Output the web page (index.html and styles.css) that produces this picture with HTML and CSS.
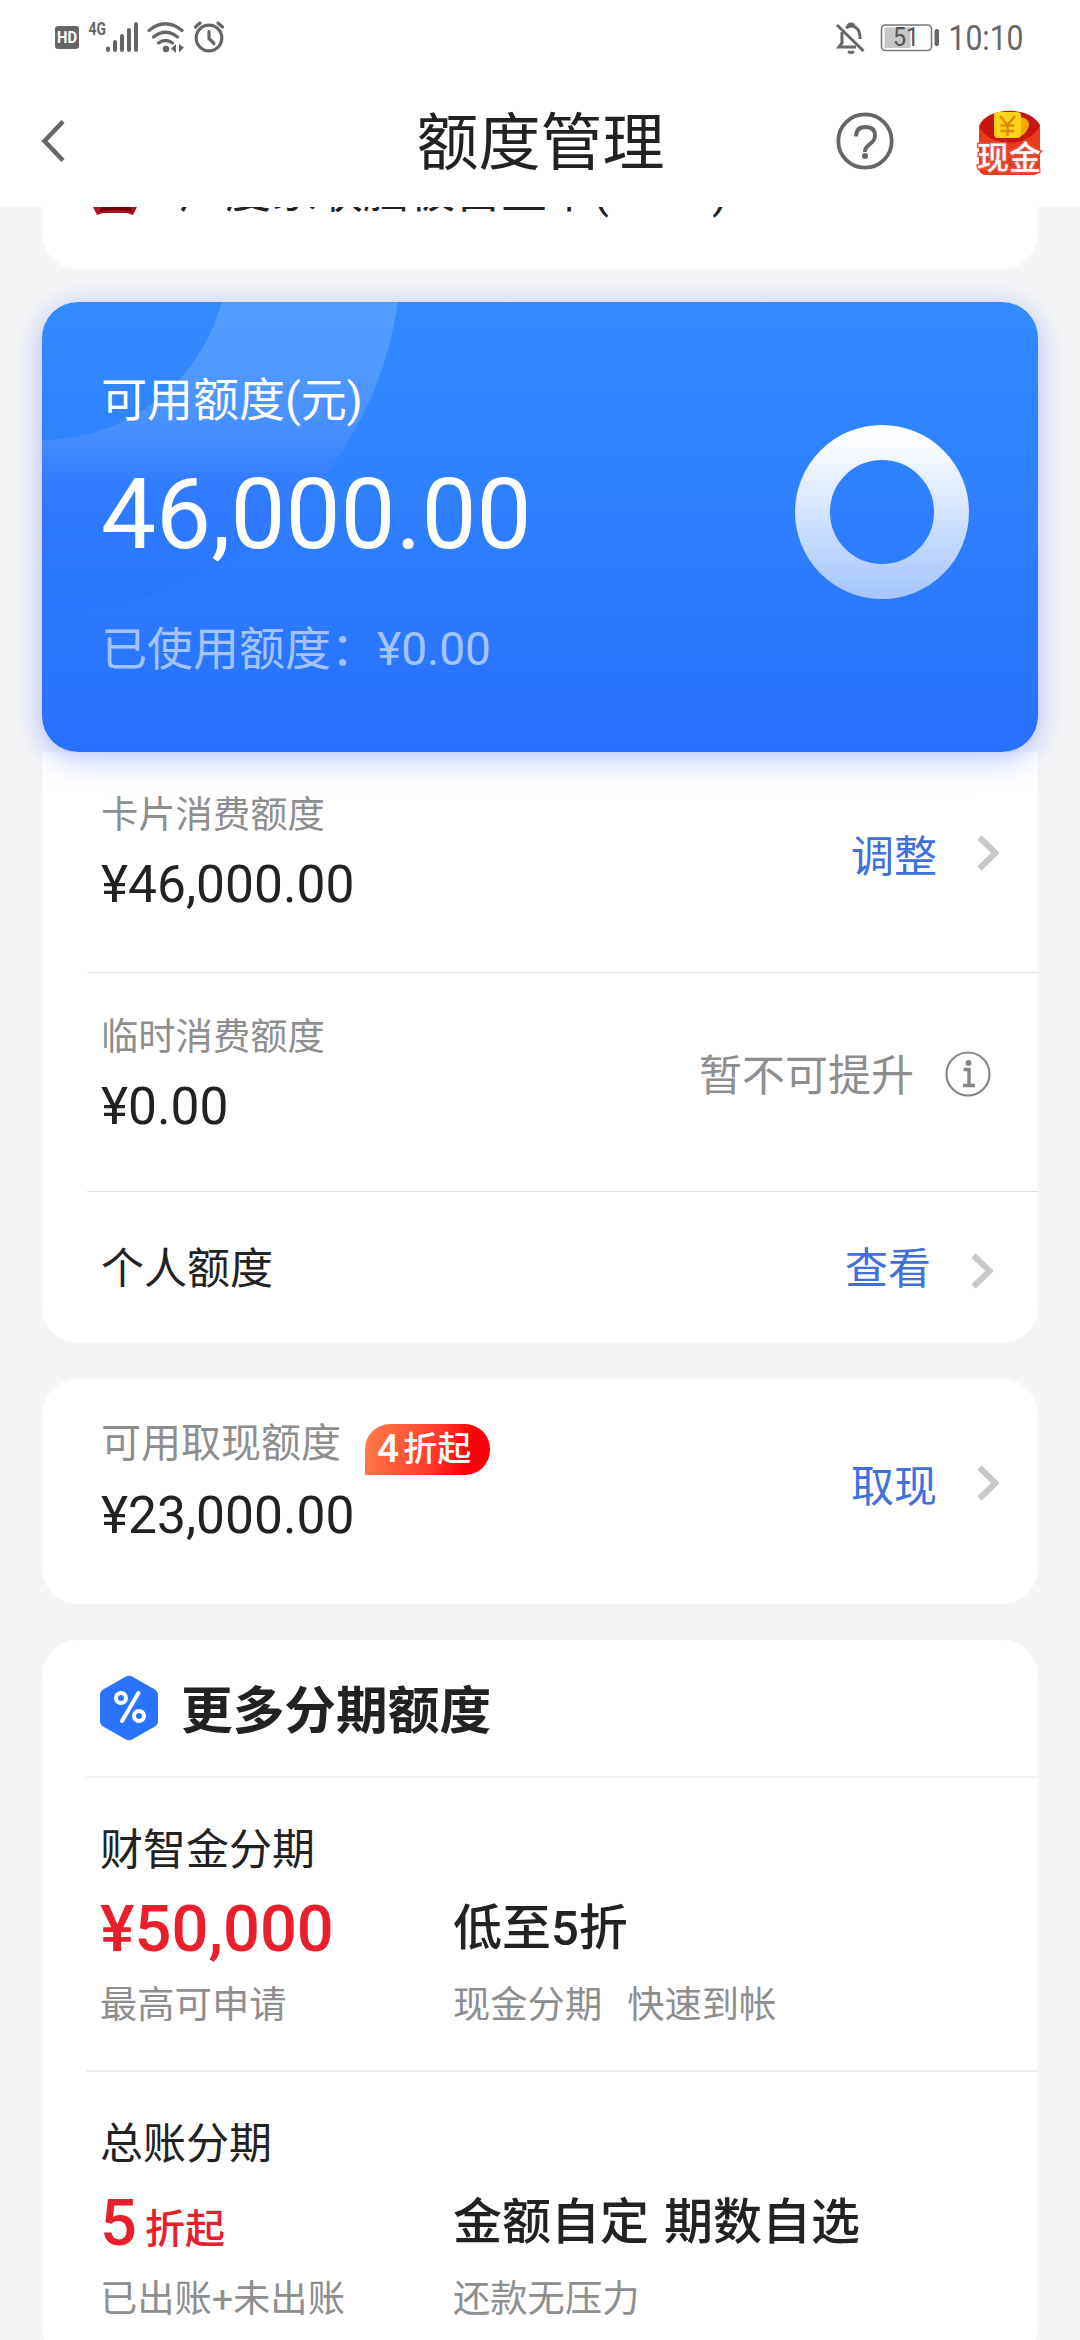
FILE: index.html
```html
<!DOCTYPE html>
<html lang="zh-CN">
<head>
<meta charset="utf-8">
<title>额度管理</title>
<link rel="stylesheet" href="styles.css">
</head>
<body>
<div class="screen">
  <div class="status">
    <svg class="status-left" width="200" height="50" viewBox="0 0 200 50">
      <rect x="15" y="16" width="24" height="23" rx="3" fill="#666"/>
      <text x="17" y="33" class="hd" textLength="20" lengthAdjust="spacingAndGlyphs">HD</text>
      <text x="48.500" y="25" class="net" textLength="17.500" lengthAdjust="spacingAndGlyphs">4G</text>
      <g stroke="#666" stroke-width="4" stroke-linecap="round">
        <path d="M68 38.500v1.500M75 32v8M82 26v14M89 20v20M96 14v26"/>
      </g>
      <g fill="none" stroke="#666" stroke-width="3.200" stroke-linecap="round">
        <path d="M109 20.500q16.500-13.500 33 0M113.500 27q12-9.500 24 0M118.500 33q7-5 14 0"/>
        <circle cx="169" cy="28" r="12.800"/>
        <path d="M169 21.500v7l5 5M155.500 17l4.500-4M182.500 17l-4.500-4"/>
      </g>
      <circle cx="126" cy="39" r="3.200" fill="#666"/>
      <path d="M136 34v9l-5-4.500zM139 34l5 3.500-5 5z" fill="#666"/>
    </svg>
    <svg class="status-right" width="200" height="50" viewBox="0 0 200 50">
      <g fill="none" stroke="#666" stroke-width="3">
        <path d="M7 15l26.500 26"/>
        <path d="M12 22v11l-3 4h17M16 18q4-3.500 9-1 5 3 5 10v2M18 17q0-3 3-3t3 3"/>
        <path d="M18 41.500q3 2 6 0"/>
      </g>
      <rect x="54.500" y="17.500" width="26" height="20.500" fill="#c6c6c6"/>
      <rect x="51.500" y="15" width="50" height="25.500" rx="4" fill="none" stroke="#777" stroke-width="1.600"/>
      <rect x="104.500" y="19" width="4.500" height="17" rx="2" fill="#666"/>
      <text x="63" y="35.500" class="battery" textLength="26" lengthAdjust="spacingAndGlyphs">51</text>
      <text x="118.500" y="39.500" class="clock" textLength="75" lengthAdjust="spacingAndGlyphs">10:10</text>
    </svg>
  </div>
  <header class="header">
    <svg class="back" width="26" height="46" viewBox="0 0 26 46"><path d="M23 3.500L4.500 23 23 42.500" fill="none" stroke="#666" stroke-width="4.500"/></svg>
    <h1 class="title">额度管理</h1>
    <div class="tools">
      <svg width="60" height="60" viewBox="0 0 60 60">
        <circle cx="30" cy="30" r="26.700" fill="none" stroke="#666" stroke-width="3.800"/>
        <path d="M21 25.500q0-9.500 9.500-9.500t9.500 8.500q0 4.500-4.500 8t-5.500 6.500v2" fill="none" stroke="#666" stroke-width="3.800"/>
        <circle cx="30" cy="45" r="3" fill="#666"/>
      </svg>
      <svg width="70" height="72" viewBox="0 0 70 72">
        <path d="M4 21C12 2 54 0 65 20v42q0 8-8 8H12q-8 0-8-8z" fill="#c8150f"/>
        <path d="M4 21q8 16 31 17Q57 37 65 20v42q0 8-8 8H12q-8 0-8-8z" fill="#ea3a1c"/>
        <path d="M45 12q9 1 9 8-1 7-9 12z" fill="#f7a900"/>
        <rect x="19" y="7" width="27" height="26" rx="4" fill="#ffd21a"/>
        <path d="M25 11l7.500 9 7.500-9M32.500 20v11M25.500 20.500h14M25.500 26h14" fill="none" stroke="#e08a00" stroke-width="2.500"/>
        <text x="2" y="64" class="cash">现金</text>
      </svg>
    </div>
  </header>
  <main class="content">
    <section class="card card-top">
      <svg class="crest" width="46" height="10" viewBox="0 0 46 10"><path d="M0 0h44l-4 8-6-2H10L4 8z" fill="#b01228"/><path d="M9 0h28l3 5q-19-4-34 0z" fill="#700208"/></svg>
      <span class="cardname">广度家联脑被自主卡(8888)</span>
    </section>
    <section class="hero">
      <svg class="hero-ring" width="360" height="312" viewBox="0 0 360 312">
        <defs><linearGradient id="arc" gradientUnits="userSpaceOnUse" x1="0" y1="0" x2="0" y2="312">
          <stop offset="0" stop-color="#fff" stop-opacity=".15"/><stop offset=".25" stop-color="#fff" stop-opacity=".14"/>
          <stop offset=".58" stop-color="#3a6cff" stop-opacity=".25"/><stop offset="1" stop-color="#2060ff" stop-opacity=".12"/>
        </linearGradient></defs>
        <circle cx="0" cy="-48" r="272.500" fill="none" stroke="url(#arc)" stroke-width="173"/>
      </svg>
      <div class="hero-text">
        <div class="hero-label">可用额度(元)</div>
        <div class="hero-value">46,000.00</div>
        <div class="hero-used">已使用额度：¥0.00</div>
      </div>
      <svg class="donut" width="174" height="174" viewBox="0 0 174 174">
        <defs><linearGradient id="don" gradientUnits="userSpaceOnUse" x1="0" y1="0" x2="0" y2="174">
          <stop offset=".05" stop-color="#fff"/><stop offset="1" stop-color="#a4c5ff"/>
        </linearGradient></defs>
        <circle cx="87" cy="87" r="69.500" fill="none" stroke="url(#don)" stroke-width="35"/>
      </svg>
    </section>
    <section class="card card-limits">
      <div class="row row-first">
        <div class="info"><div class="label">卡片消费额度</div><div class="value">¥46,000.00</div></div>
        <div class="action"><span class="link">调整</span><svg class="chev" width="22" height="36" viewBox="0 0 22 36"><path d="M2.500 2.500l16 15.500-16 15.500" fill="none" stroke="#c8c8c8" stroke-width="6"/></svg></div>
      </div>
      <div class="row row-second">
        <div class="info"><div class="label">临时消费额度</div><div class="value">¥0.00</div></div>
        <div class="action action-muted"><span>暂不可提升</span>
          <svg width="46" height="46" viewBox="0 0 46 46"><circle cx="23" cy="23" r="21.500" fill="none" stroke="#888" stroke-width="2.200"/><circle cx="23.500" cy="12" r="3" fill="#888"/><path d="M18.500 18.500h5.500v16M18 34.500h12" fill="none" stroke="#888" stroke-width="3.400"/></svg>
        </div>
      </div>
      <div class="row row-third">
        <div class="name">个人额度</div>
        <div class="action"><span class="link">查看</span><svg class="chev" width="22" height="36" viewBox="0 0 22 36"><path d="M2.500 2.500l16 15.500-16 15.500" fill="none" stroke="#c8c8c8" stroke-width="6"/></svg></div>
      </div>
    </section>
    <section class="card card-cash">
      <div class="row row-cash">
        <div class="info">
          <div class="label label-cash">可用取现额度<span class="badge"><b>4</b>折起</span></div>
          <div class="value">¥23,000.00</div>
        </div>
        <div class="action"><span class="link">取现</span><svg class="chev" width="22" height="36" viewBox="0 0 22 36"><path d="M2.500 2.500l16 15.500-16 15.500" fill="none" stroke="#c8c8c8" stroke-width="6"/></svg></div>
      </div>
    </section>
    <section class="card card-more">
      <div class="more-head">
        <svg width="60" height="66" viewBox="0 0 60 66">
          <path d="M26.500 1.800q3.500-2 7 0l22 12.500q3.500 2 3.500 6v25.400q0 4-3.500 6l-22 12.500q-3.500 2-7 0l-22-12.500q-3.500-2-3.500-6V20.300q0-4 3.500-6z" fill="#2a73ff"/>
          <g fill="none" stroke="#fff" stroke-width="4" stroke-linecap="round"><path d="M39.500 18L23 46"/><circle cx="22" cy="23" r="5"/><circle cx="40" cy="41" r="5"/></g>
        </svg>
        <h2 class="more-title">更多分期额度</h2>
      </div>
      <div class="plan">
        <div class="plan-name">财智金分期</div>
        <div class="plan-rate">¥50,000</div>
        <div class="plan-slogan">低至5折</div>
        <div class="plan-note">最高可申请</div>
        <div class="plan-note"><span>现金分期</span><span>快速到帐</span></div>
      </div>
      <div class="plan">
        <div class="plan-name">总账分期</div>
        <div class="plan-rate">5<small>折起</small></div>
        <div class="plan-slogan"><span>金额自定</span><span>期数自选</span></div>
        <div class="plan-note">已出账+未出账</div>
        <div class="plan-note">还款无压力</div>
      </div>
    </section>
  </main>
</div>
</body>
</html>
```
FILE: styles.css
```css
* { box-sizing: border-box; }
body { margin: 0; background: #f5f5f5; }
svg { display: block; flex: none; }
.screen {
  position: relative; z-index: 0;
  width: 1080px; height: 2340px; overflow: hidden;
  display: flex; flex-direction: column;
  background: #f5f5f5; color: #222;
  font-family: Roboto, "Noto Sans CJK SC", sans-serif;
}
.status { flex: none; height: 76px; padding: 10px 50px 0 40px; display: flex; justify-content: space-between; background: #fff; }
.hd { font-size: 17px; font-weight: 700; fill: #fff; }
.net { font-size: 19px; font-weight: 700; fill: #666; }
.battery { font-size: 26px; fill: #555; }
.clock { font-size: 35px; fill: #666; }
.header { flex: none; height: 131px; padding: 0 35px 0 40px; display: grid; grid-template-columns: 220px 1fr 220px; align-items: center; background: #fff; }
.title { margin: 4px 0 0 -4px; font-size: 62px; line-height: 80px; font-weight: 400; text-align: center; }
.tools { display: flex; justify-content: flex-end; align-items: center; gap: 80px; margin-top: -2px; }
.back { margin-top: -2px; }
.cash { font-size: 32px; font-weight: 500; fill: #fff; stroke: #e5533c; stroke-width: 3px; paint-order: stroke; }

.content { flex: none; padding: 0 42px; }
.card { background: #fff; border-radius: 36px; overflow: hidden; }
.card-top { height: 62px; border-radius: 0 0 36px 36px; display: flex; align-items: flex-start; gap: 40px; padding-left: 51px; }
.cardname { font-size: 46px; line-height: 60px; margin-top: -46px; }

.hero {
  position: relative; height: 450px; margin-top: 33px; padding: 68px 69px 0 59px;
  display: flex; justify-content: space-between;
  border-radius: 36px; color: #fff;
  background: linear-gradient(#338bff, #2e80ff 45%, #2870ff);
  box-shadow: 0 6px 32px rgba(50, 90, 255, .38);
}
.hero-ring { position: absolute; left: 0; top: 0; border-top-left-radius: 36px; }
.hero-text { position: relative; }
.hero-label { font-size: 46px; line-height: 60px; }
.hero-value { font-size: 98px; line-height: 120px; margin-top: 25px; }
.hero-used { font-size: 46px; line-height: 60px; margin-top: 44px; color: #a3c4ff; }
.donut { margin-top: 55px; }

.card-limits { position: relative; z-index: -1; border-radius: 0 0 36px 36px; }
.row { margin-left: 45px; padding-left: 14px; padding-right: 39px; display: flex; justify-content: space-between; align-items: flex-start; }
.row-first { height: 221px; padding-top: 37px; border-bottom: 1px solid #e2e2e2; }
.row-second { height: 219px; padding-top: 38px; padding-right: 47px; border-bottom: 1px solid #e2e2e2; }
.row-third { height: 151px; padding-right: 45px; align-items: center; }
.label { font-size: 37.300px; line-height: 52px; color: #8e8e8e; }
.value { font-size: 51.500px; line-height: 60px; margin-top: 14px; }
.name { font-size: 43px; line-height: 50px; margin-top: 2px; }
.action { display: flex; align-items: center; gap: 40px; font-size: 43px; line-height: 50px; }
.link { color: #416fdb; }
.row-first .action { margin-top: 43px; }
.row-first .chev, .row-cash .chev { margin-top: -8px; }
.row-second .action { margin-top: 40px; gap: 31px; }
.row-second .action svg { margin-top: -5px; }
.row-third .action { margin-top: 3px; }
.row-third .chev { margin-top: 3px; }
.action-muted { color: #8e8e8e; }

.card-cash { margin-top: 36px; height: 225px; }
.row-cash { padding-top: 39px; }
.label-cash { display: flex; align-items: center; height: 52px; font-size: 40px; }
.badge {
  height: 51px; width: 125px; margin: 11px 0 0 24px; padding: 0 16px 0 12px; display: flex; align-items: center;
  font-size: 34px; line-height: 51px; font-weight: 500; color: #fff;
  border-radius: 25px 25px 25px 0; background: linear-gradient(105deg, #ff7f4b, #ff3b2c 55%, #fd0009 80%);
}
.badge b { font-size: 39px; font-weight: 500; margin-right: 4px; }
.row-cash .value { margin-top: 16px; }
.row-cash .action { margin-top: 44px; }

.card-more { margin-top: 36px; height: 724px; }
.more-head { height: 138px; margin-left: 44px; padding-left: 13px; display: flex; align-items: center; gap: 22px; border-bottom: 2px solid #f4f4f4; }
.more-title { margin: 8px 0 0; font-size: 51.700px; line-height: 60px; font-weight: 700; }
.plan {
  height: 294px; margin-left: 44px; padding: 47px 0 0 14px; border-bottom: 2px solid #f0f0f0;
  display: grid; grid-template-columns: 353px 1fr; grid-template-rows: 50px 60px 44px; row-gap: 24px;
}
.plan:last-child { border-bottom: 0; }
.plan-name { grid-column: 1 / 3; font-size: 43px; line-height: 50px; }
.plan-rate { font-size: 65px; line-height: 60px; font-weight: 500; color: #e9202c; }
.plan-rate small { font-size: 40px; margin-left: 8px; position: relative; top: -2px; }
.plan-slogan { display: flex; gap: 15px; font-size: 49px; line-height: 60px; font-weight: 500; }
.plan-note { display: flex; gap: 25px; font-size: 37.300px; line-height: 44px; color: #8e8e8e; }
```
